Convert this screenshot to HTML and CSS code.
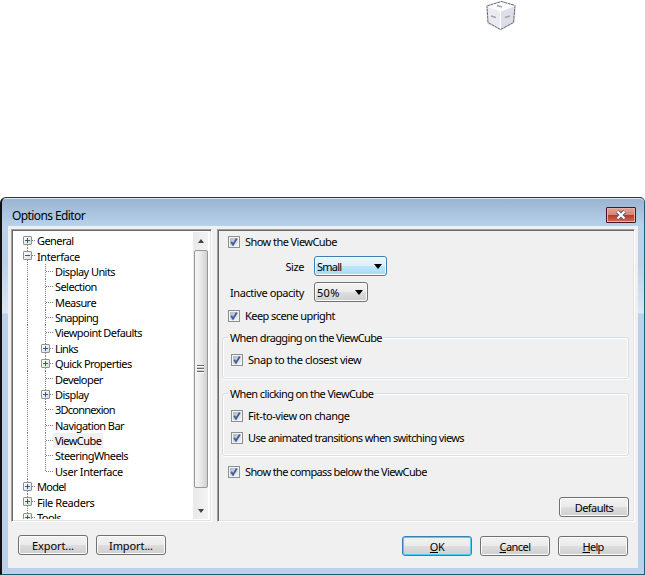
FILE: index.html
```
<!DOCTYPE html>
<html lang="en">
<head>
    <meta charset="utf-8">
    <title>Options Editor</title>
    <link rel="stylesheet" href="styles.css">
</head>
<body>

<svg width="0" height="0" class="defs">
    <defs>
        <linearGradient id="boxFill" x1="0" y1="0" x2="1" y2="1">
            <stop offset="0" stop-color="#aeb5bf"/>
            <stop offset="1" stop-color="#f6f7f9"/>
        </linearGradient>
        <symbol id="check" viewBox="0 0 12 12">
            <rect x=".5" y=".5" width="11" height="11" fill="#f4f4f4" stroke="#8e8f8f"/>
            <rect x="2" y="2" width="8" height="8" fill="url(#boxFill)"/>
            <path d="M3.2 5.8 5 8.7 8.8 2.6" fill="none" stroke="#42609e" stroke-width="1.9"/>
        </symbol>
    </defs>
</svg>

<div class="cube">
    <svg width="34" height="32" viewBox="0 0 34 32">
        <path d="M2 5.500 17 .5 32 5 31 23 17 31 3 24Z" fill="#8a8d93" opacity=".18"/>
        <path d="M3 6 17.500 1.500 31 5.500 16.500 11Z" fill="#fcfcfd"/>
        <path d="M3 6 16.500 11 16.500 29.500 4 22.500Z" fill="#e9ebf1"/>
        <path d="M16.500 11 31 5.500 29.500 22.500 16.500 29.500Z" fill="#dcdfe7"/>
        <path d="M3 6 17.500 1.500 31 5.500 29.500 22.500 16.500 29.500 4 22.500Z" fill="none" stroke="#66696f" stroke-dasharray="3 .6"/>
        <path d="M3.500 6.500 16.500 11 30.500 6M16.500 11V29" fill="none" stroke="#fff"/>
        <path d="m13 5.500 5 1.500M7 16l5 1.500M21 17.500l5-1.500" stroke="#a2a5ac" stroke-width="1.500"/>
    </svg>
</div>

<div class="window">
    <div class="titlebar">
        <span class="title">Options Editor</span>
        <span class="close">
            <svg width="12" height="10" viewBox="0 0 12 10">
                <path d="m2.500 1.500 7 7m0-7-7 7" stroke="#545868" stroke-width="4"/>
                <path d="m2.500 1.500 7 7m0-7-7 7" stroke="#fff" stroke-width="2.200"/>
            </svg>
        </span>
    </div>

    <div class="client">
        <div class="panels">
            <div class="tree">
                <ul class="nodes">
                    <li class="root first"><i class="box plus"></i><span>General</span></li>
                    <li class="root"><i class="box"></i><span class="loose">Interface</span></li>
                    <li class="child"><span>Display Units</span></li>
                    <li class="child"><span>Selection</span></li>
                    <li class="child"><span>Measure</span></li>
                    <li class="child"><span class="tight">Snapping</span></li>
                    <li class="child"><span>Viewpoint Defaults</span></li>
                    <li class="child"><i class="box plus"></i><span class="tight">Links</span></li>
                    <li class="child"><i class="box plus"></i><span>Quick Properties</span></li>
                    <li class="child"><span>Developer</span></li>
                    <li class="child"><i class="box plus"></i><span>Display</span></li>
                    <li class="child"><span class="tight">3Dconnexion</span></li>
                    <li class="child"><span>Navigation Bar</span></li>
                    <li class="child"><span class="selected">ViewCube</span></li>
                    <li class="child"><span>SteeringWheels</span></li>
                    <li class="child last"><span class="loose">User Interface</span></li>
                    <li class="root"><i class="box plus"></i><span class="tight">Model</span></li>
                    <li class="root"><i class="box plus"></i><span class="loose">File Readers</span></li>
                    <li class="root"><i class="box plus"></i><span>Tools</span></li>
                </ul>
                <div class="scrollbar">
                    <i class="arrow up"></i>
                    <div class="thumb"><i class="grip"></i></div>
                    <i class="arrow down"></i>
                </div>
            </div>

            <div class="page">
                <div class="check"><svg class="tick"><use href="#check"/></svg><span>Show the ViewCube</span></div>
                <div class="field size"><label class="loose">Size</label><div class="combo hot"><span class="tight">Small</span></div></div>
                <div class="field opacity"><label class="loose">Inactive opacity</label><div class="combo short"><span class="wide">50%</span></div></div>
                <div class="check keep"><svg class="tick"><use href="#check"/></svg><span>Keep scene upright</span></div>
                <fieldset class="dragging">
                    <legend class="long">When dragging on the ViewCube</legend>
                    <div class="check"><svg class="tick"><use href="#check"/></svg><span class="loose">Snap to the closest view</span></div>
                </fieldset>
                <fieldset class="clicking">
                    <legend class="long">When clicking on the ViewCube</legend>
                    <div class="check"><svg class="tick"><use href="#check"/></svg><span class="loose">Fit-to-view on change</span></div>
                    <div class="check"><svg class="tick"><use href="#check"/></svg><span class="long">Use animated transitions when switching views</span></div>
                </fieldset>
                <div class="check compass"><svg class="tick"><use href="#check"/></svg><span class="long">Show the compass below the ViewCube</span></div>
                <div class="button defaults">Defaults</div>
            </div>
        </div>

        <div class="buttons">
            <div class="button raised">Export...</div>
            <div class="button raised">Import...</div>
            <div class="button ok"><span><u>O</u>K</span></div>
            <div class="button"><span><u>C</u>ancel</span></div>
            <div class="button"><span class="tight"><u>H</u>elp</span></div>
        </div>
    </div>
</div>

</body>
</html>
```

FILE: styles.css
```
* { box-sizing: border-box; }

body {
    margin: 0;
    width: 645px;
    height: 575px;
    overflow: hidden;
    background: #fff;
    color: #000;
    font: 11px/15px "Noto Sans", Tahoma, sans-serif;
    letter-spacing: -0.56px;
    white-space: nowrap;
}

.tight { letter-spacing: -0.75px; }
.long { letter-spacing: -0.62px; }
.loose { letter-spacing: -0.42px; }
.wide { letter-spacing: 0.3px; }

.defs { display: block; }

.cube {
    height: 197px;
    padding-left: 484px;
}

.window {
    width: 645px;
    height: 378px;
    padding: 0 6px 6px;
    border: 1px solid #16606f;
    border-top-color: #333;
    border-left: 2px solid #111;
    border-radius: 6px 5px 0 0;
    box-shadow: inset 0 1px #dbe7f3;
    background: linear-gradient(#99b4d1, #b9d1ea 28px, #b9d1ea 65px, #dae7f5 115px, #b9d1ea 116px);
}

.titlebar {
    display: flex;
    justify-content: space-between;
    height: 28px;
    padding: 9px 2px 0 4px;
}

.title {
    font-size: 12px;
    line-height: 18px;
    letter-spacing: -0.6px;
}

.close {
    display: flex;
    align-items: center;
    justify-content: center;
    width: 30px;
    height: 16px;
    border: 1px solid #4a1420;
    border-radius: 1px;
    box-shadow: inset 0 0 0 1px #e8b0a6;
    background: linear-gradient(#e3a298, #d58478 48%, #b53a22 50%, #cf6d58);
}

.client {
    height: 342px;
    padding: 3px 3px 0;
    background: #f0f0f0;
}

.panels {
    display: flex;
    gap: 5px;
    height: 293px;
}

.tree, .page {
    border: 1px solid;
    border-color: #a0a0a0 #fff #fff #a0a0a0;
    box-shadow: inset 1px 1px #696969, inset -1px -1px #e3e3e3;
}

.tree {
    display: flex;
    justify-content: space-between;
    width: 201px;
    padding: 2px 3px 2px 2px;
    background: #fff;
}

.nodes {
    width: 178px;
    height: 287px;
    margin: 0;
    padding: 1px 0 0;
    overflow: hidden;
    list-style: none;
}

.nodes li {
    position: relative;
    display: flex;
    align-items: center;
    height: 15.38px;
    padding-left: 23px;
    /* dotted trunk shared by all root rows */
    background: repeating-linear-gradient(#808080 0 1px, transparent 1px 2px) 13px 0 / 1px 100% no-repeat;
}

.nodes .first { background-position: 13px 8px; }

.nodes .child {
    padding-left: 41px;
    background:
        repeating-linear-gradient(#808080 0 1px, transparent 1px 2px) 13px 0 / 1px 100% no-repeat,
        repeating-linear-gradient(#808080 0 1px, transparent 1px 2px) 31px 0 / 1px 100% no-repeat;
}

.nodes .last { background-size: 1px 100%, 1px 50%; }

.nodes li::before {
    content: "";
    position: absolute;
    left: 14px;
    top: 7px;
    width: 8px;
    height: 1px;
    background: repeating-linear-gradient(90deg, #808080 0 1px, transparent 1px 2px);
}

.nodes .child::before { left: 32px; }

/* expander sits on top of the dotted lines */
.box {
    position: absolute;
    left: 9px;
    top: 3px;
    width: 9px;
    height: 9px;
    border: 1px solid #919191;
    border-radius: 1px;
    background:
        linear-gradient(#35549a, #35549a) center / 5px 1px no-repeat,
        linear-gradient(135deg, #fff, #dcdcdc);
}

.child .box { left: 27px; }

.plus {
    background:
        linear-gradient(#35549a, #35549a) center / 5px 1px no-repeat,
        linear-gradient(#35549a, #35549a) center / 1px 5px no-repeat,
        linear-gradient(135deg, #fff, #dcdcdc);
}

.nodes .selected {
    margin: 0 -2px;
    padding: 0 2px;
    background: #f0f0f0;
}

.scrollbar {
    display: flex;
    flex-direction: column;
    align-items: center;
    width: 15px;
    background: linear-gradient(90deg, #e9e9e9, #f3f3f3);
}

.arrow {
    height: 18px;
    border: 3px solid transparent;
}

.up { border-bottom: 4px solid #444; border-top-width: 7px; height: 11px; margin-bottom: 7px; }
.down { border-top: 4px solid #444; margin-top: 21px; height: 7px; }

.thumb {
    display: flex;
    align-items: center;
    justify-content: center;
    width: 14px;
    height: 238px;
    border: 1px solid #979797;
    border-radius: 2px;
    background: linear-gradient(90deg, #f5f5f5, #e9e9e9 50%, #cfcfcf);
}

.grip {
    width: 7px;
    height: 8px;
    background: repeating-linear-gradient(#666 0 1px, #fff 1px 2px, #ccc 2px 3px);
}

.page {
    width: 418px;
    padding: 5px 5px 0 4px;
}

.check {
    display: flex;
    align-items: center;
    gap: 5px;
    height: 13px;
    padding-left: 6px;
}

.tick {
    width: 12px;
    height: 12px;
}

.field {
    display: flex;
    align-items: center;
    height: 20px;
}

.field label {
    width: 82px;
    margin-right: 10px;
    text-align: right;
}

.size { margin-top: 8px; }
.opacity { margin-top: 6px; }
.keep { margin-top: 7px; }

.combo, .button {
    border: 1px solid #707070;
    border-radius: 3px;
    box-shadow: inset 0 0 0 1px #fcfcfc;
    background: linear-gradient(#f2f2f2, #ebebeb 49%, #dddddd 51%, #cfcfcf);
}

.combo {
    display: flex;
    align-items: center;
    justify-content: space-between;
    width: 73px;
    height: 20px;
    padding: 0 4px 0 2px;
}

.combo::after {
    content: "";
    border: 4px solid transparent;
    border-top: 5px solid #000;
    border-bottom: 0;
}

.short { width: 54px; }

.hot {
    border-color: #3c7fb1;
    background: linear-gradient(#eaf6fd, #d9f0fc 49%, #bee6fd 51%, #a7d9f5);
}

fieldset {
    position: relative;
    width: 407px;
    margin: 0;
    padding: 0;
    border: 1px solid #d5dfe5;
    border-radius: 3px;
    box-shadow: inset 0 0 0 1px #fff, 0 1px #fff;
}

/* captions overlay the group frame */
legend {
    position: absolute;
    left: 5px;
    top: -8px;
    padding: 0 2px;
    background: #f0f0f0;
}

.dragging {
    height: 42px;
    margin-top: 15px;
    padding-top: 15px;
}

.clicking {
    height: 63px;
    margin-top: 14px;
    padding-top: 15px;
}

fieldset .check { padding-left: 8px; }
fieldset .check + .check { margin-top: 9px; }

.compass { margin-top: 9px; }

.button {
    display: flex;
    align-items: center;
    justify-content: center;
    width: 70px;
    height: 20px;
}

.defaults { margin: 19px 0 0 337px; }

.buttons {
    display: flex;
    gap: 8px;
    padding: 14px 0 0 7px;
}

.raised {
    margin-top: -1px;
    letter-spacing: -0.1px;
}

.ok {
    margin-left: 228px;
    border-color: #3c7fb1;
    box-shadow: inset 0 0 0 1px #48d1f5;
}
```
